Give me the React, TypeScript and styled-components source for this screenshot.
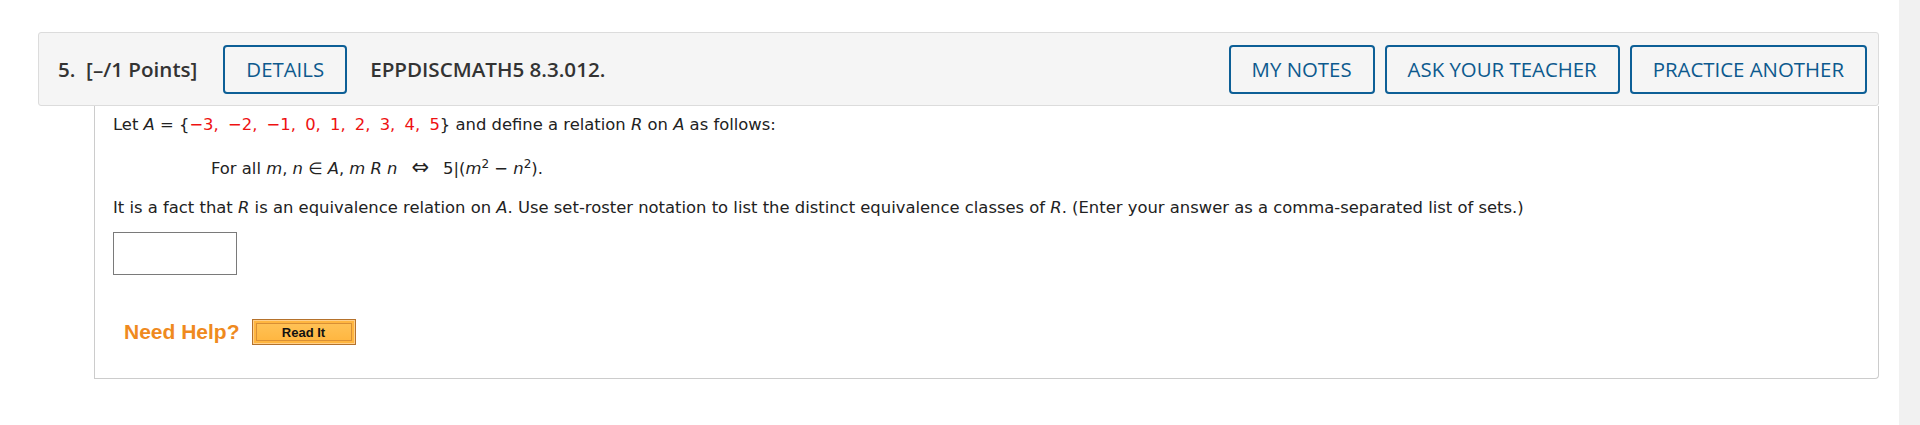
import React from "react";
import styled, { createGlobalStyle } from "styled-components";

const Global = createGlobalStyle`
  html, body { margin: 0; padding: 0; background: #ffffff; }
  body { font-family: "DejaVu Sans", Verdana, sans-serif; }
`;

const Page = styled.div`
  display: flex;
  min-height: 425px;
`;

const Main = styled.main`
  flex: 1;
  padding: 32px 20px 0 38px;
`;

const ScrollTrack = styled.div`
  width: 21px;
  background: #f1f1f1;
  flex: none;
`;

const Header = styled.header`
  display: flex;
  align-items: center;
  height: 74px;
  box-sizing: border-box;
  padding: 0 11px 0 19px;
  background: #f5f5f5;
  border: 1px solid #dcdcdc;
  border-radius: 3px;
  font-family: "Open Sans", sans-serif;
  font-size: 20.6px;
  color: #333333;
`;

const Points = styled.span`
  font-weight: 600;
  white-space: pre;
  margin-right: 26px;
`;

const Code = styled.span`
  font-weight: 600;
  margin-left: 23px;
`;

const Spacer = styled.div`
  flex: 1;
`;

const Actions = styled.div`
  display: flex;
  gap: 10px;
`;

const HeadButton = styled.button`
  height: 49px;
  box-sizing: border-box;
  padding: 0 21px;
  background: transparent;
  border: 2px solid #0d5f96;
  border-radius: 4px;
  font-family: "Open Sans", sans-serif;
  font-size: 20.4px;
  font-weight: 500;
  color: #0d5a8e;
  cursor: pointer;
`;

const Body = styled.section`
  margin-left: 56px;
  border: 1px solid #cccccc;
  border-top: none;
  border-radius: 0 0 4px 0;
  padding: 7px 18px 33px 18px;
  font-size: 16.4px;
  color: #222222;
`;

const Para = styled.p<{ $top?: number; $indent?: number }>`
  margin: ${(p) => p.$top ?? 0}px 0 0 ${(p) => p.$indent ?? 0}px;
  line-height: 24px;
`;

const Red = styled.span`
  color: #ee1111;
  word-spacing: 4px;
`;

const Arrow = styled.span`
  display: inline-block;
  margin: 0 14px;
  font-size: 21px;
  line-height: 1;
`;

const Sup = styled.sup`
  font-size: 12px;
  line-height: 0;
`;

const AnswerBox = styled.input`
  display: block;
  margin-top: 12px;
  width: 124px;
  height: 43px;
  box-sizing: border-box;
  border: 1px solid #7a7a7a;
  border-radius: 0;
  padding: 0 4px;
  background: #fff;
`;

const HelpRow = styled.div`
  display: flex;
  align-items: center;
  gap: 12px;
  margin-top: 44px;
  padding-left: 11px;
`;

const NeedHelp = styled.span`
  font-family: "Liberation Sans", Arial, sans-serif;
  font-weight: 700;
  font-size: 21px;
  color: #ef8a1e;
`;

const ReadIt = styled.button`
  width: 104px;
  height: 26px;
  box-sizing: border-box;
  border: 1px solid #b5722c;
  box-shadow: inset 0 0 0 1px #ffd08a, inset 0 0 0 3px #ffb640, inset 0 0 0 4px #d98f35;
  background: linear-gradient(#ffc45a, #ffb43c);
  font-family: "Liberation Sans", Arial, sans-serif;
  font-weight: 700;
  font-size: 13px;
  color: #111;
  padding: 0;
  cursor: pointer;
`;

export default function App() {
  return (
    <Page>
      <Global />
      <Main>
        <Header>
          <Points>{"5.  [–/1 Points]"}</Points>
          <HeadButton>DETAILS</HeadButton>
          <Code>EPPDISCMATH5 8.3.012.</Code>
          <Spacer />
          <Actions>
            <HeadButton>MY NOTES</HeadButton>
            <HeadButton>ASK YOUR TEACHER</HeadButton>
            <HeadButton>PRACTICE ANOTHER</HeadButton>
          </Actions>
        </Header>
        <Body>
          <Para>
            Let <i>A</i> = {"{"}
            <Red>−3, −2, −1, 0, 1, 2, 3, 4, 5</Red>
            {"}"} and define a relation <i>R</i> on <i>A</i> as follows:
          </Para>
          <Para $top={20} $indent={98}>
            For all <i>m</i>, <i>n</i> ∈ <i>A</i>, <i>m</i> <i>R</i> <i>n</i>
            <Arrow>⇔</Arrow>5|(<i>m</i>
            <Sup>2</Sup> − <i>n</i>
            <Sup>2</Sup>).
          </Para>
          <Para $top={15}>
            It is a fact that <i>R</i> is an equivalence relation on <i>A</i>. Use set-roster notation to list the
            distinct equivalence classes of <i>R</i>. (Enter your answer as a comma-separated list of sets.)
          </Para>
          <AnswerBox type="text" aria-label="answer" />
          <HelpRow>
            <NeedHelp>Need Help?</NeedHelp>
            <ReadIt>Read It</ReadIt>
          </HelpRow>
        </Body>
      </Main>
      <ScrollTrack />
    </Page>
  );
}
